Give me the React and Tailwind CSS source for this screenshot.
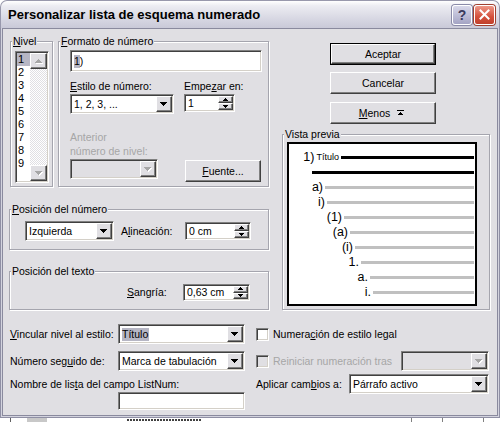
import React from "react";

const sunken =
  "border border-t-[#808080] border-l-[#808080] border-r-white border-b-white shadow-[inset_1px_1px_0_#404040,inset_-1px_-1px_0_#d4d0c8]";
const raised =
  "border border-t-white border-l-white border-r-[#404040] border-b-[#404040] shadow-[inset_-1px_-1px_0_#808080] bg-[#e0dfe3]";
const sel = "bg-[#b6b6c4]";

function U({ children }) {
  return <span className="underline decoration-1 underline-offset-[1px]">{children}</span>;
}

function Tri({ dir = "down", w = 7, color = "#000", shadow = false }) {
  const h = Math.ceil(w / 2);
  const rows = Array.from({ length: h }, (_, i) => i);
  const y = (i) => (dir === "down" ? i : h - 1 - i);
  return (
    <svg width={w + 1} height={h + 1} className="block" shapeRendering="crispEdges">
      {shadow &&
        rows.map((i) => (
          <rect key={"s" + i} x={i + 1} y={y(i) + 1} width={w - 2 * i} height={1} fill="#fff" />
        ))}
      {rows.map((i) => (
        <rect key={i} x={i} y={y(i)} width={w - 2 * i} height={1} fill={color} />
      ))}
    </svg>
  );
}

function Select({ className = "", value, disabled, highlight }) {
  return (
    <div className={`${sunken} ${disabled ? "bg-[#e0dfe3]" : "bg-white"} flex p-[1px] ${className}`}>
      <div className="flex-1 flex items-center pl-[2px] overflow-hidden whitespace-nowrap">
        {value && <span className={highlight ? `${sel} pr-[1px]` : ""}>{value}</span>}
      </div>
      <div className={`${raised} w-[16px] flex items-center justify-center`}>
        <Tri dir="down" w={7} color={disabled ? "#a6a6a6" : "#000"} shadow={disabled} />
      </div>
    </div>
  );
}

function Spin({ className = "", value }) {
  return (
    <div className={`${sunken} bg-white flex p-[1px] ${className}`}>
      <div className="flex-1 flex items-center pl-[2px] whitespace-nowrap">{value}</div>
      <div className="flex flex-col w-[15px]">
        <div className={`${raised} flex-1 flex items-center justify-center`}>
          <Tri dir="up" w={5} />
        </div>
        <div className={`${raised} flex-1 flex items-center justify-center`}>
          <Tri dir="down" w={5} />
        </div>
      </div>
    </div>
  );
}

function Btn({ children, className = "", def }) {
  if (def)
    return (
      <div className={`border border-black ${className}`}>
        <div className={`${raised} h-full w-full flex items-center justify-center`}>{children}</div>
      </div>
    );
  return <div className={`${raised} flex items-center justify-center ${className}`}>{children}</div>;
}

function Group({ label, className = "", children }) {
  return (
    <div className={`relative border border-[#a5a5ae] shadow-[inset_1px_1px_0_#fff,1px_1px_0_#fff] ${className}`}>
      <div className="absolute left-[1px] -top-[8px] bg-[#e0dfe3] px-[1px] leading-[14px] whitespace-nowrap">
        {label}
      </div>
      {children}
    </div>
  );
}

function Check({ disabled }) {
  return <div className={`w-[13px] h-[13px] shrink-0 ${sunken} ${disabled ? "bg-[#e0dfe3]" : "bg-white"}`} />;
}

function NivelList() {
  const items = ["1", "2", "3", "4", "5", "6", "7", "8", "9"];
  return (
    <div className={`${sunken} bg-white w-[34px] h-[132px] p-[1px] flex text-[11px]`}>
      <div className="flex-1 flex flex-col">
        {items.map((n, i) => (
          <div key={n} className={`h-[13px] leading-[13px] pl-[1px] ${i === 0 ? sel : ""}`}>
            {n}
          </div>
        ))}
      </div>
      <div className="w-[17px] flex flex-col bg-[repeating-conic-gradient(#e0dfe3_0_25%,#ffffff_0_50%)] bg-[length:2px_2px]">
        <div className={`${raised} h-[16px] flex items-center justify-center`}>
          <Tri dir="up" w={7} color="#a6a6a6" shadow />
        </div>
        <div className="flex-1" />
        <div className={`${raised} h-[16px] flex items-center justify-center`}>
          <Tri dir="down" w={7} color="#a6a6a6" shadow />
        </div>
      </div>
    </div>
  );
}

const previewRows = [
  { w: "w-[50px]", text: "", line: "bg-black h-[3px]" },
  { w: "w-[21px]", text: null, line: "bg-black h-[3px]" },
  { w: "w-[34px]", text: "a)", line: "bg-[#c0c0c0] h-[3px]" },
  { w: "w-[36px]", text: "i)", line: "bg-[#c0c0c0] h-[3px]" },
  { w: "w-[53px]", text: "(1)", line: "bg-[#c0c0c0] h-[3px]" },
  { w: "w-[59px]", text: "(a)", line: "bg-[#c0c0c0] h-[3px]" },
  { w: "w-[64px]", text: "(i)", line: "bg-[#c0c0c0] h-[3px]" },
  { w: "w-[70px]", text: "1.", line: "bg-[#c0c0c0] h-[3px]" },
  { w: "w-[79px]", text: "a.", line: "bg-[#c0c0c0] h-[3px]" },
  { w: "w-[82px]", text: "i.", line: "bg-[#c0c0c0] h-[3px]" },
];

function Preview() {
  return (
    <div className="border-2 border-black bg-white w-[190px] h-[164px] pt-[6px] pr-[1px]">
      {previewRows.map((r, i) => (
        <div key={i} className="h-[15px] flex items-center">
          <div className={`${r.w} shrink-0 flex justify-end items-center whitespace-nowrap text-[12.5px] leading-[15px]`}>
            {i === 0 ? (
              <>
                <span>1)</span>
                <span className="text-[9px] ml-[2px] leading-[15px]">Título</span>
              </>
            ) : (
              r.text
            )}
          </div>
          <div className={`flex-1 ml-[2px] ${r.line}`} />
        </div>
      ))}
    </div>
  );
}

function MenosIcon() {
  return (
    <svg width="7" height="6" className="block" shapeRendering="crispEdges">
      <rect x="0" y="0" width="7" height="1" fill="#000" />
      <rect x="3" y="2" width="1" height="1" fill="#000" />
      <rect x="2" y="3" width="3" height="1" fill="#000" />
      <rect x="1" y="4" width="5" height="1" fill="#000" />
    </svg>
  );
}

function TitleBar() {
  return (
    <div className="h-[28px] flex items-center justify-between pl-[7px] pr-[4px] rounded-t-[7px] bg-[linear-gradient(180deg,#ffffff_0%,#ececf2_18%,#dcdce6_55%,#c9c9d8_100%)] border-x border-t border-[#9898ac]">
      <div className="font-bold text-[13px] text-black">Personalizar lista de esquema numerado</div>
      <div className="flex gap-[2px] items-center">
        <div className="w-[20px] h-[20px] rounded-[3px] border border-white bg-[linear-gradient(180deg,#d8d8ea,#a4a4c4)] shadow-[0_0_0_1px_#8a8aa8] flex items-center justify-center">
          <span className="text-[14px] font-bold text-[#3a3a5c] leading-none">?</span>
        </div>
        <div className="w-[21px] h-[20px] rounded-[3px] border border-white bg-[linear-gradient(180deg,#ee9888,#d4503c_60%,#c0402c)] shadow-[0_0_0_1px_#a04030] flex items-center justify-center">
          <svg width="11" height="11" viewBox="0 0 11 11">
            <path d="M1.5 1.5 L9.5 9.5 M9.5 1.5 L1.5 9.5" stroke="#fff" strokeWidth="2" strokeLinecap="square" />
          </svg>
        </div>
      </div>
    </div>
  );
}

export default function App() {
  return (
    <div className="w-[500px] h-[422px] bg-white overflow-hidden font-['Liberation_Sans',Arial,sans-serif] text-[10.5px] text-black leading-[13px]">
      <div className="h-[418px] flex flex-col">
        <TitleBar />
        <div className="flex-1 flex flex-col bg-[#d3d3de] border-x border-b border-[#8f8fa4] px-[1px] pb-[1px]">
          <div className="flex-1 bg-[#e0dfe3] border border-[#8a8a9e] px-[6px]">
            {/* top section */}
            <div className="flex items-start mt-[12px]">
              {/* left column */}
              <div className="w-[260px] flex flex-col">
                <div className="flex">
                  <Group label={<><U>N</U>ivel</>} className="ml-[1px] w-[43px] h-[146px]">
                    <div className="pl-[4px] pt-[9px]">
                      <NivelList />
                    </div>
                  </Group>
                  <Group label={<><U>F</U>ormato de número</>} className="ml-[5px] w-[211px] h-[146px]">
                    <div className="pl-[11px] pt-[8px]">
                      <div className={`${sunken} bg-white w-[192px] h-[22px] flex items-center pl-[3px]`}>
                        <span className={sel}>1</span>
                        <span>)</span>
                      </div>
                      <div className="flex mt-[8px]">
                        <div className="flex flex-col">
                          <div className="h-[13px]">
                            <U>E</U>stilo de número:
                          </div>
                          <Select className="mt-[1px] w-[104px] h-[20px]" value="1, 2, 3, ..." />
                        </div>
                        <div className="flex flex-col ml-[10px]">
                          <div className="h-[13px]">
                            Empe<U>z</U>ar en:
                          </div>
                          <Spin className="mt-[1px] w-[51px] h-[18px]" value="1" />
                        </div>
                      </div>
                      <div className="mt-[16px] text-[#a6a6a6] leading-[14px]">
                        <div>Anterior</div>
                        <div>número de nivel:</div>
                      </div>
                      <div className="flex items-start mt-[1px]">
                        <Select className="w-[88px] h-[20px]" disabled />
                        <Btn className="ml-[27px] mt-[1px] w-[76px] h-[22px]">
                          <span>
                            <U>F</U>uente...
                          </span>
                        </Btn>
                      </div>
                    </div>
                  </Group>
                </div>
                <Group label={<><U>P</U>osición del número</>} className="mt-[22px] w-[260px] h-[41px]">
                  <div className="flex items-center pl-[15px] pt-[11px]">
                    <Select className="w-[89px] h-[20px]" value="Izquierda" />
                    <div className="ml-[7px] w-[64px]">
                      A<U>l</U>ineación:
                    </div>
                    <Spin className="w-[66px] h-[18px]" value="0 cm" />
                  </div>
                </Group>
                <Group label="Posición del texto" className="mt-[21px] w-[260px] h-[39px]">
                  <div className="flex items-center pl-[117px] pt-[12px]">
                    <div className="w-[56px]">
                      <U>S</U>angría:
                    </div>
                    <Spin className="w-[67px] h-[17px]" value="0,63 cm" />
                  </div>
                </Group>
              </div>
              {/* right column */}
              <div className="ml-[13px] w-[208px] flex flex-col pt-[2px]">
                <Btn def className="ml-[48px] w-[106px] h-[22px]">
                  Aceptar
                </Btn>
                <Btn className="ml-[48px] mt-[7px] w-[106px] h-[22px]">Cancelar</Btn>
                <Btn className="ml-[48px] mt-[8px] w-[106px] h-[22px]">
                  <span className="ml-[-3px]">
                    <U>M</U>enos
                  </span>
                  <span className="ml-[7px]">
                    <MenosIcon />
                  </span>
                </Btn>
                <Group label="Vista previa" className="mt-[10px] w-[208px] h-[176px]">
                  <div className="pl-[4px] pt-[7px]">
                    <Preview />
                  </div>
                </Group>
              </div>
            </div>

            {/* bottom section */}
            <div className="flex mt-[14px]">
              <div className="ml-[1px] w-[235px] flex flex-col">
                <div className="flex items-center h-[20px]">
                  <div className="w-[108px] whitespace-nowrap">
                    <U>V</U>incular nivel al estilo:
                  </div>
                  <Select className="w-[127px] h-[20px]" value="Título" highlight />
                </div>
                <div className="flex items-center h-[20px] mt-[7px]">
                  <div className="w-[108px] whitespace-nowrap">
                    Número seg<U>u</U>ido de:
                  </div>
                  <Select className="w-[127px] h-[20px]" value="Marca de tabulación" />
                </div>
                <div className="mt-[6px] leading-[14px] whitespace-nowrap">
                  Nombre de lis<U>t</U>a del campo ListNum:
                </div>
                <div className={`${sunken} bg-white ml-[108px] mt-[1px] w-[127px] h-[18px]`} />
              </div>
              <div className="ml-[11px] w-[233px] flex flex-col">
                <div className="flex items-center h-[20px]">
                  <Check />
                  <div className="ml-[4px] whitespace-nowrap">
                    Numera<U>c</U>ión de estilo legal
                  </div>
                </div>
                <div className="flex items-center h-[20px] mt-[7px]">
                  <Check disabled />
                  <div className="ml-[4px] whitespace-nowrap text-[#a6a6a6]">Reiniciar numeración tras</div>
                  <Select className="ml-auto w-[88px] h-[20px]" disabled />
                </div>
                <div className="flex items-center h-[20px] mt-[3px]">
                  <div className="whitespace-nowrap">
                    Aplicar cam<U>b</U>ios a:
                  </div>
                  <Select className="ml-auto w-[140px] h-[20px]" value="Párrafo activo" />
                </div>
              </div>
            </div>
          </div>
        </div>
      </div>
      <div className="h-[4px] flex items-start">
        <div className="ml-[10px] w-[1px] h-[4px] bg-[#606060]" />
        <div className="ml-[16px] w-[20px] h-[4px] bg-[#c8c8c8]" />
        <div className="ml-[80px] w-[74px] h-[2px] mt-[1px] bg-[repeating-linear-gradient(90deg,#404040_0_2px,#ffffff_2px_3px)]" />
        <div className="ml-[210px] w-[1px] h-[4px] bg-[#808080]" />
        <div className="ml-[30px] w-[1px] h-[4px] bg-[#808080]" />
        <div className="ml-[40px] w-[1px] h-[4px] bg-[#808080]" />
      </div>
    </div>
  );
}
